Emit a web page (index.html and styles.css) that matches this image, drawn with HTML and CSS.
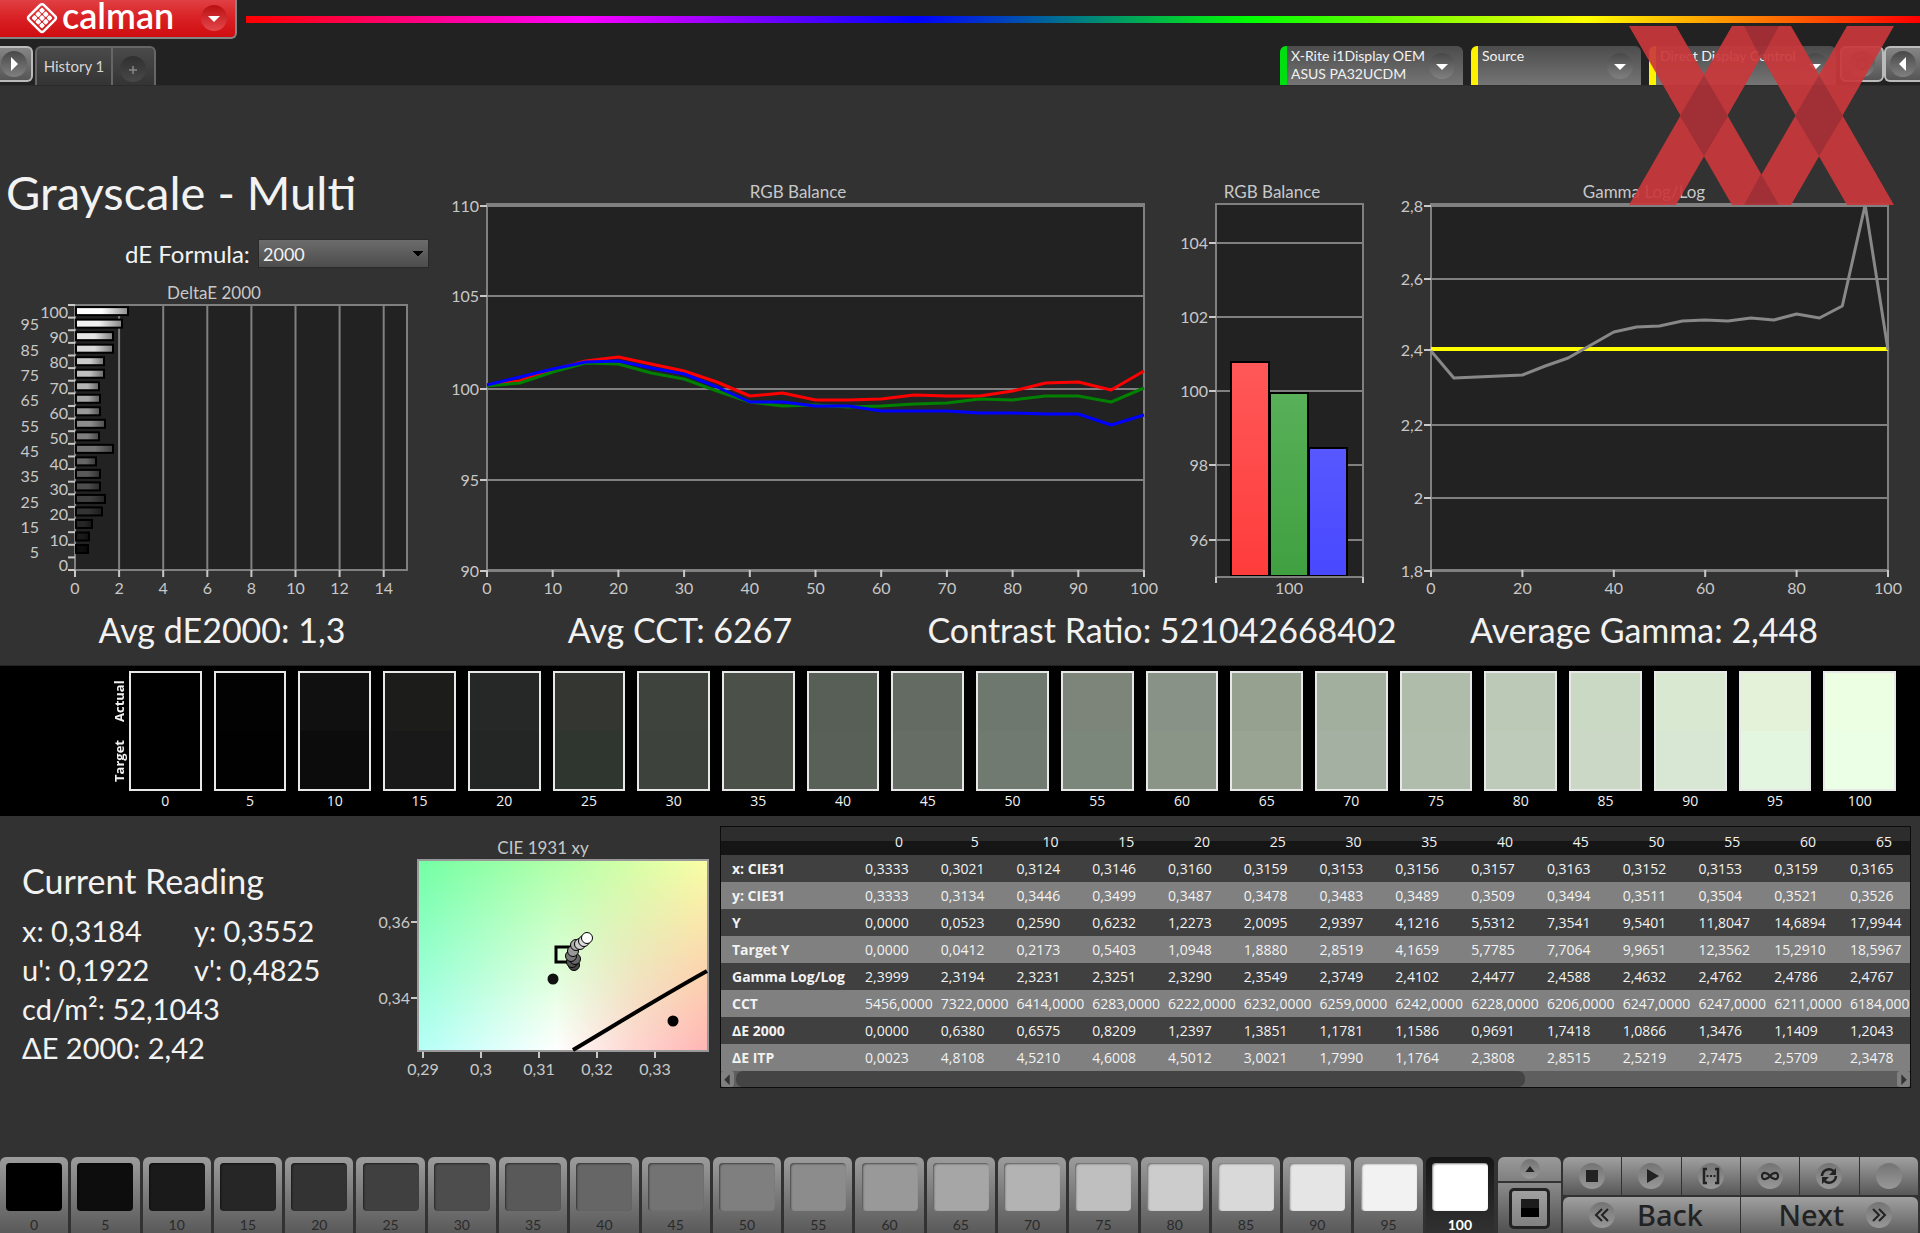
FILE: index.html
```html
<!DOCTYPE html>
<html lang="en">
<head>
<meta charset="utf-8">
<title>Calman - Grayscale Multi</title>
<link rel="stylesheet" href="styles.css">
</head>
<body>
<header class="header">
  <div class="brand-row">
    <button class="brand" type="button" aria-label="Calman menu">
      <svg class="brand-mark" viewBox="0 0 32 32" aria-hidden="true">
        <g transform="rotate(45 16 16)" fill="#fff">
          <path d="M5.500 12V8a2.500 2.500 0 0 1 2.500-2.500h16a2.500 2.500 0 0 1 2.500 2.500v16a2.500 2.500 0 0 1-2.500 2.500H8a2.500 2.500 0 0 1-2.500-2.500z" fill="none" stroke="#fff" stroke-width="2.500"/>
          <rect x="8.500" y="8.500" width="4.400" height="4.400" rx="1"/><rect x="13.800" y="8.500" width="4.400" height="4.400" rx="1"/><rect x="19.100" y="8.500" width="4.400" height="4.400" rx="1"/>
          <rect x="8.500" y="13.800" width="4.400" height="4.400" rx="1"/><rect x="13.800" y="13.800" width="4.400" height="4.400" rx="1"/><rect x="19.100" y="13.800" width="4.400" height="4.400" rx="1"/>
          <rect x="8.500" y="19.100" width="4.400" height="4.400" rx="1"/><rect x="13.800" y="19.100" width="4.400" height="4.400" rx="1"/><rect x="19.100" y="19.100" width="4.400" height="4.400" rx="1"/>
        </g>
      </svg>
      <span class="brand-name">calman</span>
      <span class="knob knob-red"><svg viewBox="0 0 26 26"><path d="M7 11h12l-6 6z" fill="#fff"/></svg></span>
    </button>
    <div class="spectrum"></div>
  </div>
  <div class="tab-row">
    <button class="edge-button edge-left" type="button" aria-label="Show panel"><span class="knob"><svg viewBox="0 0 26 26"><path d="M10 6l7 7-7 7z" fill="#fff"/></svg></span></button>
    <div class="tabs">
      <button class="tab" type="button">History 1</button>
      <button class="tab tab-add" type="button" aria-label="Add history"><span class="knob knob-dark"><svg viewBox="0 0 26 26"><path d="M9 14h8M13 10v8" stroke="#888" stroke-width="1.500"/></svg></span></button>
    </div>
    <div class="devices">
      <button class="device meter" type="button"><span class="device-name">X-Rite i1Display OEM<br>ASUS PA32UCDM</span><span class="knob"><svg viewBox="0 0 26 26"><path d="M7 11h12l-6 6z" fill="#fff"/></svg></span></button>
      <button class="device source" type="button"><span class="device-name">Source</span><span class="knob"><svg viewBox="0 0 26 26"><path d="M7 11h12l-6 6z" fill="#fff"/></svg></span></button>
      <button class="device display" type="button"><span class="device-name">Direct Display Control</span><span class="knob"><svg viewBox="0 0 26 26"><path d="M7 11h12l-6 6z" fill="#fff"/></svg></span></button>
      <button class="edge-button gear" type="button" aria-label="Settings"><span class="knob"><svg viewBox="0 0 26 26"><circle cx="13" cy="13" r="5" fill="none" stroke="#444" stroke-width="3"/></svg></span></button>
      <button class="edge-button edge-right" type="button" aria-label="Hide panel"><span class="knob"><svg viewBox="0 0 26 26"><path d="M16 6l-7 7 7 7z" fill="#fff"/></svg></span></button>
    </div>
  </div>
  <svg class="watermark" viewBox="0 0 265 179" aria-hidden="true">
    <g opacity="0.920">
      <path d="M0 0H47L150 179H103zM103 0H150L47 179H0zM115 0H162L265 179H218zM218 0H265L162 179H115z" fill="#ca383b"/>
      <path d="M75 49L99 90L75 130L51 90zM190 49L214 90L190 130L166 90zM115 0H150L132 33zM115 179H150L132 148z" fill="#aa3036"/>
    </g>
  </svg>
</header>

<main class="main">
  <section class="charts">
    <div class="delta">
      <h1 class="title">Grayscale - Multi</h1>
      <div class="formula">
        <label for="formula">dE Formula:</label>
        <select id="formula"><option>2000</option><option>ITP</option></select>
      </div>
      <svg id="delta-chart" class="chart" viewBox="0 274 440 334" role="img" aria-label="DeltaE 2000"></svg>
    </div>
    <svg id="rgb-lines" class="chart" viewBox="440 164 720 444" role="img" aria-label="RGB Balance"></svg>
    <svg id="rgb-bars" class="chart" viewBox="1160 164 230 444" role="img" aria-label="RGB Balance at 100"></svg>
    <svg id="gamma-chart" class="chart" viewBox="1390 164 530 444" role="img" aria-label="Gamma Log/Log"></svg>
  </section>

  <section class="stats">
    <p>Avg dE2000: 1,3</p>
    <p>Avg CCT: 6267</p>
    <p>Contrast Ratio: 521042668402</p>
    <p>Average Gamma: 2,448</p>
  </section>

  <section class="comparison">
    <div class="axis-names"><span>Actual</span><span>Target</span></div>
    <div id="swatches" class="swatches"></div>
  </section>

  <section class="details">
    <div class="reading">
      <h2>Current Reading</h2>
      <div class="values">
        <span>x: 0,3184</span><span>y: 0,3552</span>
        <span>u': 0,1922</span><span>v': 0,4825</span>
        <span class="wide">cd/m²: 52,1043</span>
        <span class="wide">ΔE 2000: 2,42</span>
      </div>
    </div>
    <svg id="cie-chart" class="chart" viewBox="370 832 350 250" role="img" aria-label="CIE 1931 xy"></svg>
    <div class="data">
      <div class="data-view"><table id="data-table"></table></div>
      <div class="scroller">
        <button type="button" aria-label="Scroll left"><svg viewBox="0 0 12 16"><path d="M8 3v10L3 8z" fill="#333"/></svg></button>
        <div class="track"><div class="thumb"></div></div>
        <button type="button" aria-label="Scroll right"><svg viewBox="0 0 12 16"><path d="M4 3v10l5-5z" fill="#333"/></svg></button>
      </div>
    </div>
  </section>
</main>

<footer class="footer">
  <div id="patches" class="patches"></div>
  <div class="window-controls">
    <button class="up" type="button" aria-label="Expand"><span class="disc small"><svg viewBox="0 0 26 26"><path d="M7 17h12l-6-8z" fill="#222"/></svg></span></button>
    <button class="window" type="button" aria-label="Pattern window"><span class="window-icon"><span></span></span></button>
  </div>
  <div class="transport">
    <div class="actions">
      <button type="button" aria-label="Stop"><span class="disc"><svg viewBox="0 0 26 26"><path d="M7 7h12v12H7z" fill="#222"/></svg></span></button>
      <button type="button" aria-label="Play"><span class="disc"><svg viewBox="0 0 26 26"><path d="M9 6v14l12-7z" fill="#222"/></svg></span></button>
      <button type="button" aria-label="Read series"><span class="disc"><svg viewBox="0 0 26 26"><path d="M9 6H6v14h3M17 6h3v14h-3" fill="none" stroke="#222" stroke-width="2.500"/><path d="M8.500 12h2v2h-2zM12 12h2v2h-2zM15.500 12h2v2h-2z" fill="#222"/></svg></span></button>
      <button type="button" aria-label="Continuous"><span class="disc"><svg viewBox="0 0 26 26"><path d="M13 13C10 9 5 8.500 5 13s5 4 8 0s8-4.500 8 0s-5 4-8 0z" fill="none" stroke="#222" stroke-width="2.200"/></svg></span></button>
      <button type="button" aria-label="Refresh"><span class="disc"><svg viewBox="0 0 26 26"><path d="M6 13a7 7 0 0 1 11.500-5M20 13a7 7 0 0 1-11.500 5" fill="none" stroke="#222" stroke-width="2.500"/><path d="M20 5v7h-7zM6 21v-7h7z" fill="#222"/></svg></span></button>
      <button type="button" aria-label="Unassigned"><span class="disc"></span></button>
    </div>
    <div class="steps">
      <button type="button"><span class="disc"><svg viewBox="0 0 26 26"><path d="M13 7l-6 6 6 6M19 7l-6 6 6 6" fill="none" stroke="#222" stroke-width="2"/></svg></span>Back</button>
      <button type="button">Next<span class="disc"><svg viewBox="0 0 26 26"><path d="M7 7l6 6-6 6M13 7l6 6-6 6" fill="none" stroke="#222" stroke-width="2"/></svg></span></button>
    </div>
  </div>
</footer>
<script src="app.js"></script>
</body>
</html>
```
FILE: styles.css
```css
* { box-sizing: border-box; }

body {
  margin: 0;
  min-height: 100vh;
  display: flex;
  flex-direction: column;
  background: #323232;
  color: #f2f2f2;
  font-family: Lato, "Liberation Sans", sans-serif;
  overflow-x: hidden;
}

button { border: 0; padding: 0; margin: 0; font: inherit; color: inherit; background: none; }
h1, h2, p { margin: 0; font-weight: 400; }
svg { display: block; }

/* Header */
.header { position: relative; background: #222; border-bottom: 1px solid #2b2b2b; }
.brand-row { display: flex; align-items: flex-start; height: 46px; }
.brand {
  display: flex;
  align-items: center;
  width: 237px;
  height: 39px;
  padding: 0 8px 2px 26px;
  background: linear-gradient(#e04043, #d92024 50%, #cf0d10);
  border-right: 2px solid #858585;
  border-bottom: 2px solid #858585;
  border-radius: 0 0 6px 0;
  color: #fff;
}
.brand-mark { width: 32px; height: 32px; }
.brand-name { flex: 1; padding: 0 0 6px 4px; text-align: left; font-size: 36px; line-height: 44px; font-weight: 600; }
.spectrum {
  flex: 1;
  height: 7px;
  margin: 16px 0 0 9px;
  background: linear-gradient(90deg, #f00, #f0f 20%, #00f 40%, #0f0 60%, #ff0 80%, #f00);
}
.knob {
  display: block;
  width: 26px;
  height: 26px;
  flex: none;
  border-radius: 50%;
  background: linear-gradient(#484848, #808080);
}
.knob-red { background: linear-gradient(#b80f12, #e5484b); }
.knob-dark { background: linear-gradient(#303030, #484848); }

.tab-row { display: flex; align-items: flex-start; height: 39px; }
.edge-button {
  display: flex;
  align-items: center;
  justify-content: center;
  height: 36px;
  background: linear-gradient(#858585, #555);
  border: 2px solid #bbb;
  border-radius: 6px;
}
.edge-left { width: 33px; border-left: 0; border-radius: 0 6px 6px 0; padding-right: 4px; }
.tabs { display: flex; margin-left: 2px; }
.tab {
  width: 78px;
  height: 39px;
  padding-bottom: 2px;
  border: 2px solid #666;
  border-bottom: 0;
  border-radius: 6px 0 0 0;
  background: linear-gradient(#4a4a4a, #343434);
  font-size: 15px;
  color: #d5d5d5;
}
.tab-add { width: 43px; border-left: 0; border-radius: 0 6px 0 0; display: flex; justify-content: center; align-items: center; padding: 4px 2px 0 0; }
.devices { display: flex; margin-left: auto; gap: 8px; }
.device {
  display: flex;
  justify-content: space-between;
  width: 183px;
  height: 39px;
  padding: 1px 8px 0 4px;
  background: linear-gradient(#4c4c4c, #757575);
  border-left: 7px solid #fff200;
  border-radius: 6px 6px 0 0;
  font-size: 14px;
  line-height: 18px;
  text-align: left;
  white-space: nowrap;
}
.device .knob { margin-top: 6px; }
.meter { border-left-color: #00e010; }
.source { width: 170px; }
.display { width: 187px; }
.gear { width: 44px; margin-left: -4px; }
.edge-right { width: 36px; margin-left: -8px; border-right: 0; border-radius: 6px 0 0 6px; }
.watermark { position: absolute; top: 26px; right: 26px; width: 265px; height: 179px; }

/* Charts */
.main { flex: 1; padding-top: 78px; }
.charts { display: grid; grid-template-columns: 440fr 720fr 230fr 530fr; align-items: end; }
.chart { width: 100%; height: auto; }
.chart text { font-family: Lato, "Liberation Sans", sans-serif; font-size: 16px; fill: #c8c8c8; }
.chart .heading { font-size: 17px; }
.title { padding-left: 6px; font-size: 47px; line-height: 56px; }
.formula { display: flex; align-items: center; gap: 8px; margin: 19px 0 6px; padding-left: 125px; }
.formula label { width: 125px; font-size: 24px; line-height: 29px; white-space: nowrap; }
.formula select {
  appearance: none;
  width: 171px;
  height: 29px;
  padding: 0 4px;
  border: 1px solid #2a2a2a;
  border-radius: 0;
  background: linear-gradient(45deg, transparent 50%, #000 50%) 154px 11px / 5px 6px no-repeat,
    linear-gradient(-45deg, transparent 50%, #000 50%) 159px 11px / 5px 6px no-repeat,
    linear-gradient(#6c6c6c, #4c4c4c);
  color: #f2f2f2;
  font: 18px Lato, sans-serif;
}

.stats { display: grid; grid-template-columns: 444fr 472fr 492fr 472fr 40fr; padding-bottom: 13px; }
.stats p { font-size: 34px; line-height: 44px; text-align: center; white-space: nowrap; }

/* Actual against target */
.comparison { display: flex; padding: 5px 24px 5px 110px; background: #000; border-top: 1px solid #222; }
.axis-names { display: flex; flex-direction: column; width: 19px; height: 120px; }
.axis-names span { flex: 1; writing-mode: vertical-rl; transform: rotate(180deg); text-align: center; font: 700 13px/18px "Open Sans", sans-serif; }
.swatches { flex: 1; display: grid; grid-template-columns: repeat(21, 1fr); gap: 12px; }
.swatches figure { margin: 0; text-align: center; font: 500 14px/20px "Open Sans", sans-serif; }
.swatch { height: 120px; border: 2px solid #e8e8e8; }

/* Reading, CIE diagram and table */
.details { display: grid; grid-template-columns: 370fr 350fr 1191fr 9fr; align-items: start; }
.reading { padding: 45px 0 0 22px; }
.reading h2 { font-size: 34px; line-height: 40px; }
.values { display: grid; grid-template-columns: 172px 1fr; margin-top: 10px; font-size: 29px; line-height: 39px; white-space: nowrap; }
.values .wide { grid-column: 1 / -1; }
#cie-chart { margin-top: 16px; }
.data { margin-top: 10px; border: 1px solid #0c0c0c; background: #5c5c5c; min-width: 0; }
.data-view { overflow: hidden; }
.data table { width: 101%; table-layout: fixed; border-collapse: collapse; font: 14px/18px "Open Sans", sans-serif; }
.data th, .data td { height: 27px; padding: 0 0 0 4px; font-weight: 400; text-align: left; white-space: nowrap; }
.data thead th { height: 28px; padding: 2px 0 0; text-align: center; font-weight: 500; background: linear-gradient(#2d2d2d 50%, #151515 50%); }
.data th:first-child { width: 140px; padding-left: 11px; font-weight: 700; }
.data tbody tr { background: #404040; }
.data tbody tr:nth-child(even) { background: #808080; }
.scroller { display: flex; height: 16px; background: #5e5e5e; }
.scroller button { width: 13px; background: #808080; border-radius: 3px; }
.track { flex: 1; padding: 0 0 0 2px; }
.thumb { width: 68%; height: 16px; border-radius: 7px; background: #444; }

/* Footer */
.footer { display: flex; height: 76px; color: #222; }
.patches { flex: 1; display: grid; grid-template-columns: repeat(21, 1fr); gap: 3px; padding-right: 4px; }
.patch {
  display: flex;
  flex-direction: column;
  align-items: center;
  padding: 6px 5px 0;
  border-radius: 6px 6px 0 0;
  background: linear-gradient(#9c9c9c, #555);
  font-size: 14px;
  line-height: 27px;
  color: #2a2a2a;
}
.patch span { width: 100%; max-width: 56px; height: 48px; border-radius: 4px; box-shadow: inset 1px 1px 2px rgba(0, 0, 0, 0.5); }
.patch.current { background: linear-gradient(#161616, #333); color: #fff; font-weight: 700; }
.window-controls { display: flex; flex-direction: column; gap: 2px; width: 64px; padding-right: 1px; }
.window-controls button { display: flex; align-items: center; justify-content: center; }
.up { height: 24px; border-radius: 6px 6px 0 0; background: linear-gradient(#9a9a9a, #808080); }
.window { flex: 1; background: linear-gradient(#8a8a8a, #505050); }
.window-icon { display: grid; place-items: center; width: 41px; height: 41px; border: 3px solid #222; border-radius: 5px; background: linear-gradient(#a0a0a0, #808080); }
.window-icon span { width: 18px; height: 18px; background: linear-gradient(#1c1c1c 50%, #000 50%); }
.transport { width: 358px; padding: 0 2px 0 1px; display: flex; flex-direction: column; gap: 2px; }
.actions { display: grid; grid-template-columns: repeat(6, 1fr); gap: 1px; height: 38px; }
.actions button { display: grid; place-items: center; background: linear-gradient(#a0a0a0, #585858); }
.actions button:first-child, .steps button:first-child { border-radius: 6px 0 0 0; }
.actions button:last-child, .steps button:last-child { border-radius: 0 6px 0 0; }
.disc { display: block; width: 26px; height: 26px; border-radius: 50%; background: linear-gradient(#747474, #989898); }
.small { width: 20px; height: 20px; }
.steps { flex: 1; display: grid; grid-template-columns: 1fr 1fr; gap: 1px; }
.steps button {
  display: flex;
  align-items: center;
  gap: 22px;
  padding: 0 26px;
  background: linear-gradient(#a0a0a0, #606060);
  font: 500 29px/36px "Noto Sans", sans-serif;
}
.steps button:last-child { justify-content: flex-end; }
```
FILE: app.js
```js
const levels = Array.from({ length: 21 }, (_, i) => i * 5);
const byId = (id) => document.getElementById(id);

const line = (x1, y1, x2, y2, color = '#808080', width = 2) =>
  `<line x1="${x1}" y1="${y1}" x2="${x2}" y2="${y2}" stroke="${color}" stroke-width="${width}"/>`;
const text = (x, y, value, anchor = 'middle') =>
  `<text x="${x}" y="${y}" text-anchor="${anchor}">${value}</text>`;
const heading = (x, y, value) => `<text class="heading" x="${x}" y="${y}" text-anchor="middle">${value}</text>`;
const rect = (x, y, w, h, fill, stroke = 'none', width = 0) =>
  `<rect x="${x}" y="${y}" width="${w}" height="${h}" fill="${fill}" stroke="${stroke}" stroke-width="${width}"/>`;
const plot = (x1, y1, x2, y2) => rect(x1, y1, x2 - x1, y2 - y1, '#222', '#808080', 2);
const polyline = (points, color, width) =>
  `<polyline points="${points}" fill="none" stroke="${color}" stroke-width="${width}" stroke-linejoin="round"/>`;

function yAxis(ticks, left, right) {
  return ticks.map(([label, y]) =>
    line(left, y, right, y) + line(left - 7, y, left, y, '#c8c8c8') + text(left - 8, y + 6, label, 'end')).join('');
}
function xAxis(labels, left, step, y) {
  return labels.map((label, i) => {
    const x = left + i * step;
    return line(x, y, x, y + 7, '#c8c8c8') + text(x, y + 24, label);
  }).join('');
}

// DeltaE per level, longest bar at the top
const deltaE = [14, 15, 18, 28, 31, 26, 26, 22, 39, 25, 31, 26, 26, 25, 30, 30, 39, 39, 48, 54];
let out = '<defs><linearGradient id="shade"><stop offset="0.5" stop-opacity="0"/><stop offset="1" stop-opacity="0.45"/></linearGradient></defs>';
out += heading(214, 299, 'DeltaE 2000') + plot(75, 305, 407, 570);
for (let i = 0; i < 8; i++) {
  const x = 75 + i * 44.1;
  if (i) out += line(x, 305, x, 570);
  out += line(x, 570, x, 577, '#c8c8c8') + text(x, 594, i * 2);
}
for (let i = 0; i < 22; i++) out += line(68, 305 + i * 12.62, 75, 305 + i * 12.62, '#c8c8c8');
levels.forEach((level, i) => {
  out += text(level % 10 ? 39 : 68, 571 - i * 12.66, level, 'end');
  if (!i) return;
  const g = Math.round(level * 2.55), y = 549 - (i - 1) * 12.52 - 4;
  out += rect(76, y, deltaE[i - 1] - 2, 8, `rgb(${g},${g},${g})`, '#000', 2);
  out += rect(76, y, deltaE[i - 1] - 2, 8, 'url(#shade)');
});
byId('delta-chart').innerHTML = out;

// RGB balance by level
const series = [
  ['#f00', [385, 381, 370, 361, 357, 364, 371, 382, 396, 393, 400, 400, 399, 395, 396, 396, 391, 383, 382, 390, 371]],
  ['#008000', [386, 383, 372, 363, 364, 373, 379, 391, 402, 406, 405, 407, 406, 404, 403, 399, 400, 396, 396, 402, 388]],
  ['#00f', [385, 377, 369, 362, 361, 368, 374, 387, 402, 402, 406, 406, 411, 411, 411, 413, 413, 414, 414, 425, 415]],
];
out = heading(798, 198, 'RGB Balance') + plot(487, 204, 1144, 570);
out += yAxis([[110, 206], [105, 296], [100, 389], [95, 480], [90, 571]], 487, 1144);
out += xAxis([0, 10, 20, 30, 40, 50, 60, 70, 80, 90, 100], 487, 65.7, 570);
series.forEach(([color, ys]) => { out += polyline(ys.map((y, i) => `${487 + i * 32.85},${y}`).join(' '), color, 3); });
byId('rgb-lines').innerHTML = out;

// RGB balance at the current level
out = `<defs>${[['r', '#ff5858', '#ff3c3c'], ['g', '#58b058', '#40a040'], ['b', '#5858ff', '#4848ff']].map(([id, a, b]) =>
  `<linearGradient id="bar-${id}" x2="0" y2="1"><stop stop-color="${a}"/><stop offset="1" stop-color="${b}"/></linearGradient>`).join('')}</defs>`;
out += heading(1272, 198, 'RGB Balance') + plot(1216, 204, 1363, 577);
out += yAxis([[104, 243], [102, 317], [100, 391], [98, 465], [96, 540]], 1216, 1363);
[[1231, 362, 'r'], [1270, 393, 'g'], [1309, 448, 'b']].forEach(([x, y, id]) => { out += rect(x, y, 38, 576 - y, `url(#bar-${id})`, '#000', 2); });
out += line(1215, 577, 1364, 577) + line(1216, 577, 1216, 583, '#c8c8c8') + line(1363, 577, 1363, 583, '#c8c8c8') + text(1289, 594, 100);
byId('rgb-bars').innerHTML = out;

// Gamma
const gamma = [351, 378, 377, 376, 375, 366, 358, 345, 332, 327, 326, 321, 320, 321, 318, 320, 314, 318, 306, 205, 350];
out = heading(1644, 198, 'Gamma Log/Log') + plot(1431, 204, 1888, 570);
out += yAxis([['2,8', 206], ['2,6', 279], ['2,4', 350], ['2,2', 425], ['2', 498], ['1,8', 571]], 1431, 1888);
out += xAxis([0, 20, 40, 60, 80, 100], 1431, 91.4, 570);
out += line(1431, 349, 1888, 349, '#ff0', 4);
out += polyline(gamma.map((y, i) => `${1431 + i * 22.85},${y}`).join(' '), '#888', 3);
byId('gamma-chart').innerHTML = out;

// CIE 1931 detail
out = `<defs>
<linearGradient id="upper"><stop stop-color="#72ffa4"/><stop offset="0.5" stop-color="#b4ffa8"/><stop offset="1" stop-color="#fbffa6"/></linearGradient>
<linearGradient id="lower"><stop stop-color="#b4fff8"/><stop offset="0.48" stop-color="#fff"/><stop offset="0.75" stop-color="#ffd4d0"/><stop offset="1" stop-color="#ffb4b4"/></linearGradient>
<linearGradient id="fade" x2="0" y2="1"><stop stop-color="#000"/><stop offset="1" stop-color="#fff"/></linearGradient>
<mask id="lower-mask"><rect x="417" y="859" width="291" height="192" fill="url(#fade)"/></mask></defs>`;
out += heading(543, 854, 'CIE 1931 xy') + rect(417, 860, 291, 191, 'url(#upper)');
out += `<rect x="417" y="860" width="291" height="191" fill="url(#lower)" mask="url(#lower-mask)"/>`;
out += rect(418, 860, 290, 191, 'none', '#999', 2);
out += `<path d="M573 1050C620 1022 655 1000 707 971" fill="none" stroke="#000" stroke-width="4"/>`;
out += rect(556, 947, 15, 15, 'none', '#000', 3);
[[574, 965, '#444'], [572, 962, '#555'], [575, 959, '#666'], [571, 956, '#777'], [573, 951, '#999'], [576, 945, '#aaa'], [580, 944, '#ccc'], [584, 941, '#ddd'], [587, 938, '#fff']].forEach(([x, y, fill]) => {
  out += `<circle cx="${x}" cy="${y}" r="5.5" fill="${fill}" stroke="#000" stroke-width="1"/>`;
});
out += '<circle cx="553" cy="979" r="5.5" fill="#111"/><circle cx="673" cy="1021" r="5.5" fill="#000"/>';
['0,29', '0,3', '0,31', '0,32', '0,33'].forEach((label, i) => {
  const x = 423 + i * 58;
  out += line(x, 1052, x, 1058, '#c8c8c8') + text(x, 1075, label);
});
out += line(411, 922, 417, 922, '#c8c8c8') + text(410, 928, '0,36', 'end') + line(411, 998, 417, 998, '#c8c8c8') + text(410, 1004, '0,34', 'end');
byId('cie-chart').innerHTML = out;

// Actual and target colours
const actual = ['#000', '#020202', '#101010', '#1c1c1b', '#262827', '#343632', '#3f433d', '#4b5049', '#585f57', '#636b63', '#6e786e', '#7d857a', '#889286', '#96a18f', '#a2ae9e', '#b0bcaa', '#bdc9b7', '#cad9c3', '#d8e8d1', '#e5f2da', '#edffe3'];
const target = ['#000', '#010101', '#0c0c0c', '#191919', '#232624', '#2f352f', '#3e423c', '#4b5049', '#586057', '#656d64', '#717a70', '#7c877b', '#8a9588', '#99a493', '#a4b0a1', '#b0bdad', '#bfcbba', '#cad8c5', '#d8e7d4', '#e3f6df', '#ebffe7'];
byId('swatches').innerHTML = levels.map((level, i) =>
  `<figure><div class="swatch" style="background:linear-gradient(${actual[i]} 50%,${target[i]} 50%)"></div><figcaption>${level}</figcaption></figure>`).join('');

// Measurement table
const rows = {
  'x: CIE31': '0,3333 0,3021 0,3124 0,3146 0,3160 0,3159 0,3153 0,3156 0,3157 0,3163 0,3152 0,3153 0,3159 0,3165',
  'y: CIE31': '0,3333 0,3134 0,3446 0,3499 0,3487 0,3478 0,3483 0,3489 0,3509 0,3494 0,3511 0,3504 0,3521 0,3526',
  'Y': '0,0000 0,0523 0,2590 0,6232 1,2273 2,0095 2,9397 4,1216 5,5312 7,3541 9,5401 11,8047 14,6894 17,9944',
  'Target Y': '0,0000 0,0412 0,2173 0,5403 1,0948 1,8880 2,8519 4,1659 5,7785 7,7064 9,9651 12,3562 15,2910 18,5967',
  'Gamma Log/Log': '2,3999 2,3194 2,3231 2,3251 2,3290 2,3549 2,3749 2,4102 2,4477 2,4588 2,4632 2,4762 2,4786 2,4767',
  'CCT': '5456,0000 7322,0000 6414,0000 6283,0000 6222,0000 6232,0000 6259,0000 6242,0000 6228,0000 6206,0000 6247,0000 6247,0000 6211,0000 6184,0000',
  'ΔE 2000': '0,0000 0,6380 0,6575 0,8209 1,2397 1,3851 1,1781 1,1586 0,9691 1,7418 1,0866 1,3476 1,1409 1,2043',
  'ΔE ITP': '0,0023 4,8108 4,5210 4,6008 4,5012 3,0021 1,7990 1,1764 2,3808 2,8515 2,5219 2,7475 2,5709 2,3478',
};
byId('data-table').innerHTML =
  `<thead><tr><th></th>${levels.slice(0, 14).map((l) => `<th scope="col">${l}</th>`).join('')}</tr></thead><tbody>` +
  Object.entries(rows).map(([name, values]) =>
    `<tr><th scope="row">${name}</th>${values.split(' ').map((v) => `<td>${v}</td>`).join('')}</tr>`).join('') + '</tbody>';

// Patch buttons
byId('patches').innerHTML = levels.map((level) => {
  const g = Math.round(level * 2.55);
  return `<button type="button" class="patch${level === 100 ? ' current' : ''}"><span style="background:rgb(${g},${g},${g})"></span>${level}</button>`;
}).join('');
```
